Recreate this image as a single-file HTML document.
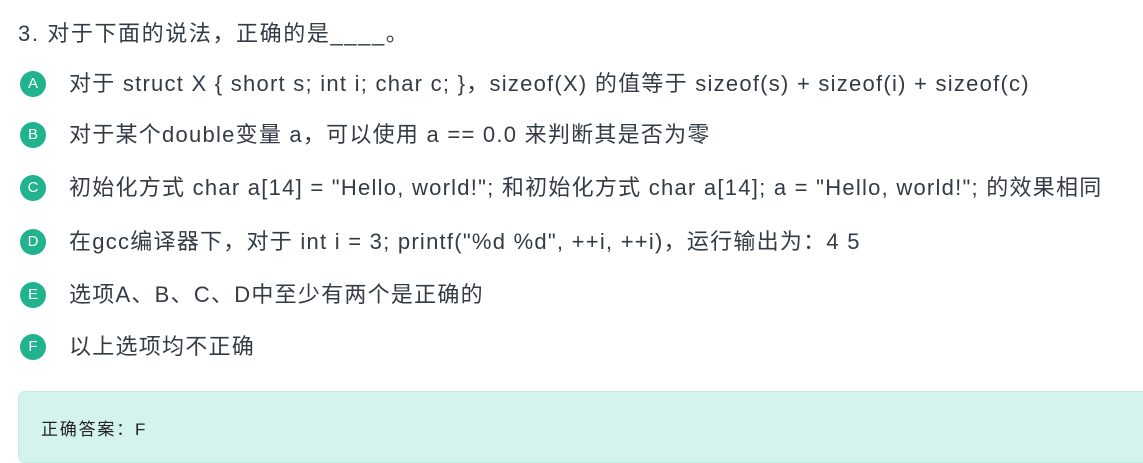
<!DOCTYPE html>
<html><head><meta charset="utf-8"><style>
body{margin:0;width:1143px;height:444px;overflow:hidden;background:#fff;font-family:"Liberation Sans","Noto Sans CJK SC",sans-serif;color:#333b45;}
.t{position:absolute;left:18px;top:16px;font-size:22px;letter-spacing:1.6px;white-space:nowrap;}
.o{position:absolute;left:0;height:30px;white-space:nowrap;font-size:22px;letter-spacing:1.25px;}
.c{position:absolute;left:20px;top:3px;width:26px;height:26px;border-radius:50%;background:#20b38e;color:#fff;font-size:15px;letter-spacing:0;text-align:center;line-height:26px;}
.x{position:absolute;left:69px;top:1px;line-height:30px;}
.ans{position:absolute;left:18px;top:391px;width:1140px;height:70px;background:#d4f3ed;border:1px solid #c2ebe2;border-radius:7px;}
.ans span{position:absolute;left:22px;top:23px;font-size:17px;letter-spacing:1.8px;color:#222;}
</style></head><body>
<div class="t">3. 对于下面的说法，正确的是____。</div>
<div class="o" style="top:68px"><div class="c">A</div><div class="x">对于 struct X { short s; int i; char c; }，sizeof(X) 的值等于 sizeof(s) + sizeof(i) + sizeof(c)</div></div>
<div class="o" style="top:119px"><div class="c">B</div><div class="x">对于某个double变量 a，可以使用 a == 0.0 来判断其是否为零</div></div>
<div class="o" style="top:172px"><div class="c">C</div><div class="x">初始化方式 char a[14] = "Hello, world!"; 和初始化方式 char a[14]; a = "Hello, world!"; 的效果相同</div></div>
<div class="o" style="top:226px"><div class="c">D</div><div class="x">在gcc编译器下，对于 int i = 3; printf("%d %d", ++i, ++i)，运行输出为：4 5</div></div>
<div class="o" style="top:279px"><div class="c">E</div><div class="x">选项A、B、C、D中至少有两个是正确的</div></div>
<div class="o" style="top:331px"><div class="c">F</div><div class="x">以上选项均不正确</div></div>
<div class="ans"><span>正确答案：F</span></div>
</body></html>
